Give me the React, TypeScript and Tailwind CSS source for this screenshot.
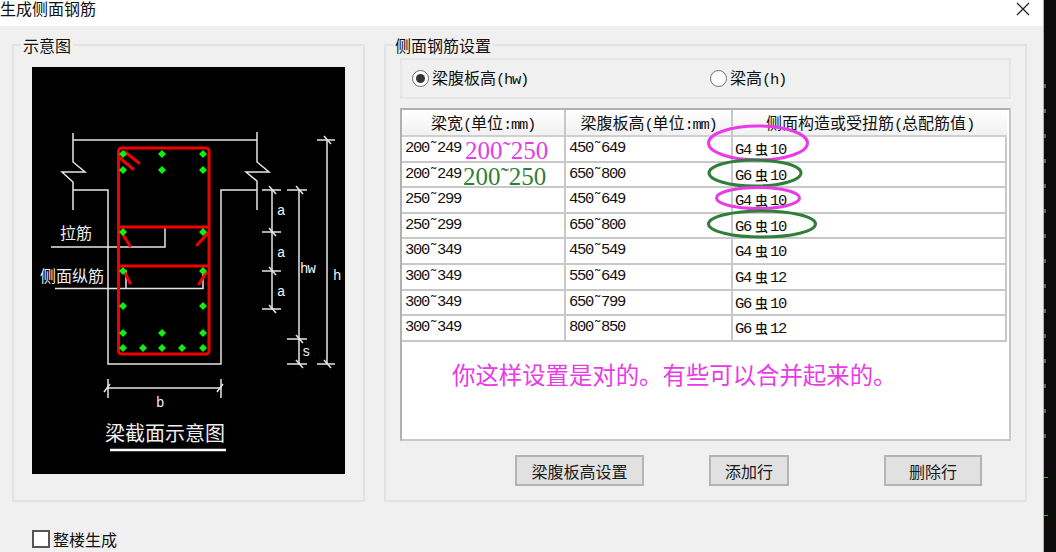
import React from "react";

const mono = "font-['Liberation_Mono','Noto_Sans_CJK_SC',monospace] text-[15.5px] tracking-[-1.3px]";
const magenta = "#e93ae6";
const green = "#2f7f3a";

const rows = [
  ["200˜249", "450˜649", "G4", "10"],
  ["200˜249", "650˜800", "G6", "10"],
  ["250˜299", "450˜649", "G4", "10"],
  ["250˜299", "650˜800", "G6", "10"],
  ["300˜349", "450˜549", "G4", "10"],
  ["300˜349", "550˜649", "G4", "12"],
  ["300˜349", "650˜799", "G6", "10"],
  ["300˜349", "800˜850", "G6", "12"],
];

const dots: [number, number][] = [
  [123, 154], [162, 154], [203, 154],
  [123, 170], [162, 170], [203, 170],
  [123, 232], [203, 232],
  [123, 271], [203, 271],
  [123, 306], [203, 306],
  [123, 333], [162, 333], [203, 333],
  [123, 348], [143, 348], [162, 348], [182, 348], [203, 348],
];

// dimension ticks: horizontal stroke plus the small slash through it
const ticks: [number, number, number, number][] = [
  [272, 190, 262, 281],
  [272, 232, 262, 281],
  [272, 271, 262, 281],
  [272, 309, 262, 281],
  [299, 190, 287, 307],
  [299, 339, 287, 307],
  [299, 364, 287, 307],
  [327, 140, 317, 335],
  [327, 364, 317, 335],
];

const BeamDiagram = () => (
  <svg viewBox="32 67 313 407" className="block w-[313px] h-[407px] bg-black">
    <g fill="none" stroke="#e6e6e6" strokeWidth="1.5">
      <path d="M73 133V162L85 172H62L73 182V210" />
      <path d="M257 132V162L269 172H246L257 181V210" />
      <path d="M73 140H257" />
      <path d="M73 190H108V364H221V190H257" />
      <path d="M272 190V309M299 190V364M327 140V364" />
      <path d="M108 379V398M221 379V398M108 388H221" />
      <path d="M104 392L110 384M217 392L223 384" />
      <path d="M51 247H165V227" />
      <path d="M55 288.5H203V270M126 288.5V270" />
      {ticks.map(([x, y, a, b]) => (
        <g key={`${x}-${y}`}>
          <path d={`M${a} ${y}H${b}`} />
          <path d={`M${x - 3} ${y - 4}L${x + 4} ${y + 4}`} />
        </g>
      ))}
    </g>
    <g fill="none" stroke="#f00000" strokeWidth="3" strokeLinecap="round">
      <rect x="118.5" y="148" width="90.5" height="206" rx="3" />
      <path d="M119 227H209M119 266H209" />
      <path d="M125 152L139 163M120 158L133 169" />
      <path d="M122 233L130 246M197 245L208 233" />
      <path d="M125 273L130 283M199 284L206 273" />
    </g>
    <g fill="#10f010">
      {dots.map(([x, y]) => (
        <path key={`${x}-${y}`} d={`M${x} ${y - 4}L${x + 4} ${y}L${x} ${y + 4}L${x - 4} ${y}Z`} />
      ))}
    </g>
    <g fill="#ededed" fontFamily="'Noto Sans CJK SC', sans-serif">
      <text x="60" y="239" fontSize="16">拉筋</text>
      <text x="40" y="282" fontSize="16">侧面纵筋</text>
      <text x="105" y="441" fontSize="20">梁截面示意图</text>
    </g>
    <g fill="#f2f2f2" fontFamily="'Liberation Mono', monospace" fontSize="14">
      <text x="277" y="215">a</text>
      <text x="277" y="257">a</text>
      <text x="277" y="296">a</text>
      <text x="300" y="273" letterSpacing="-1">hw</text>
      <text x="333" y="280">h</text>
      <text x="302" y="356">s</text>
      <text x="156" y="407">b</text>
    </g>
    <path d="M110 450H226" stroke="#fff" strokeWidth="2.5" />
  </svg>
);

const Radio = ({ checked, children }: { checked?: boolean; children: React.ReactNode }) => (
  <div className="flex items-center gap-[3px]">
    <span className="flex items-center justify-center w-[17px] h-[17px] rounded-full border border-[#6d6d6d] bg-white">
      {checked && <span className="w-[9px] h-[9px] rounded-full bg-[#333]" />}
    </span>
    <span className="text-[16px] leading-[20px]">{children}</span>
  </div>
);

const Btn = ({ w, children }: { w: string; children: React.ReactNode }) => (
  <button className={`${w} h-[31px] bg-[#e1e1e1] border-2 border-[#b4b4b4] text-[16px] text-[#1a1a1a]`}>
    {children}
  </button>
);

const Table = () => (
  <div className="relative h-[333px] border-2 border-[#b0b0b0] border-b-[#c8c8c8] border-r-[#c8c8c8] bg-white">
    <div className="w-[605px]">
      <div className="grid grid-cols-[164px_167px_274px] h-[27px] bg-gradient-to-b from-white to-[#f1f1f1] border-b-2 border-[#cfcfcf] text-[16px] leading-[24px] text-center">
        <div className="border-r-2 border-[#c8c8c8]">
          梁宽<span className={mono}>(</span>单位<span className={mono}>:mm)</span>
        </div>
        <div className="border-r-2 border-[#c8c8c8]">
          梁腹板高<span className={mono}>(</span>单位<span className={mono}>:mm)</span>
        </div>
        <div>
          侧面构造或受扭筋<span className={mono}>(</span>总配筋值<span className={mono}>)</span>
        </div>
      </div>
      {rows.map((r, i) => (
        <div
          key={i}
          className={`grid grid-cols-[164px_167px_274px] h-[25.6px] border-b-2 border-r-2 border-[#c8c8c8] leading-[23px] ${mono}`}
        >
          <div className="pl-[3px] border-r-2 border-[#c8c8c8] flex">
            {r[0]}
            {i === 0 && (
              <span className="ml-[4px] font-['Liberation_Serif',serif] text-[25px] tracking-normal text-[#e93ae6] leading-[27px]">200˜250</span>
            )}
            {i === 1 && (
              <span className="ml-[2px] font-['Liberation_Serif',serif] text-[25px] tracking-normal text-[#2f7f3a] leading-[28px]">200˜250</span>
            )}
          </div>
          <div className="pl-[3px] border-r-2 border-[#c8c8c8]">{r[1]}</div>
          <div className="pl-[2px]">
            {r[2]}
            <span className="font-['Noto_Sans_CJK_SC',sans-serif] text-[13px] font-medium tracking-normal ml-[4px] mr-[2px]">虫</span>
            {r[3]}
          </div>
        </div>
      ))}
    </div>
    <p className="mt-[16px] ml-[50px] text-[23.4px] leading-[32px] text-[#e93ae6] whitespace-nowrap">
      你这样设置是对的。有些可以合并起来的。
    </p>
    <svg className="absolute left-[302px] top-[11px] w-[116px] h-[130px] overflow-visible" viewBox="704 121 116 130" fill="none" strokeWidth="3">
      <ellipse cx="758" cy="143" rx="49.5" ry="17" stroke={magenta} />
      <ellipse cx="755" cy="173" rx="46" ry="13" stroke={green} />
      <ellipse cx="758" cy="198" rx="41.5" ry="10.5" stroke={magenta} />
      <ellipse cx="762" cy="224" rx="53.5" ry="13" stroke={green} />
    </svg>
  </div>
);

export default function App() {
  return (
    <div className="flex w-[1056px] h-[552px] overflow-hidden font-['Noto_Sans_CJK_SC',sans-serif] text-[#111]">
      <div className="w-[1043px] bg-[#f0f0f0] flex flex-col">
        <div className="h-[26px] shrink-0 bg-white flex justify-between items-start pr-[12px]">
          <span className="text-[16px] leading-[16px]">生成侧面钢筋</span>
          <svg viewBox="0 0 16 16" className="w-[16px] h-[16px] mt-[1px]" stroke="#222" strokeWidth="1.3">
            <path d="M2 2L14 14M14 2L2 14" />
          </svg>
        </div>
        <div className="flex gap-[19px] pl-[12px] pt-[8px]">
          <fieldset className="w-[353px] h-[468px] border-2 border-[#e3e3e3] pl-[18px] pr-[14px]">
            <legend className="-ml-[11px] px-[2px] text-[16px] leading-[22px]">示意图</legend>
            <div className="pt-[11px]">
              <BeamDiagram />
            </div>
          </fieldset>
          <fieldset className="w-[643px] h-[468px] border-2 border-[#e3e3e3] px-[14px]">
            <legend className="-ml-[7px] px-[2px] text-[16px] leading-[22px]">侧面钢筋设置</legend>
            <div className="mt-[2px] h-[41px] border-2 border-[#e6e6e6] pl-[10px] grid grid-cols-[298px_1fr] items-center">
              <Radio checked>
                梁腹板高<span className={mono}>(hw)</span>
              </Radio>
              <Radio>
                梁高<span className={mono}>(h)</span>
              </Radio>
            </div>
            <div className="mt-[9px]">
              <Table />
            </div>
            <div className="mt-[14px] flex">
              <div className="ml-[115px]"><Btn w="w-[129px]">梁腹板高设置</Btn></div>
              <div className="ml-[65px]"><Btn w="w-[80px]">添加行</Btn></div>
              <div className="ml-[95px]"><Btn w="w-[98px]">删除行</Btn></div>
            </div>
          </fieldset>
        </div>
        <div className="mt-[27px] ml-[32px] flex items-center gap-[3px]">
          <span className="w-[18px] h-[18px] border-2 border-[#555] bg-white" />
          <span className="text-[16px] leading-[20px]">整楼生成</span>
        </div>
      </div>
      <div className="flex-1 bg-[#0c0c0c] border-l border-[#d9a77e] flex flex-col gap-[21px] pt-[84px]">
        {Array.from({ length: 15 }).map((_, i) => (
          <span key={i} className="w-[2px] h-[4px] bg-[#5f5f5f]" />
        ))}
        <span className="w-[4px] h-[1px] bg-[#2fbf3a] mt-[18px]" />
        <span className="w-[4px] h-[1px] bg-[#2fbf3a] mt-[16px]" />
      </div>
    </div>
  );
}
